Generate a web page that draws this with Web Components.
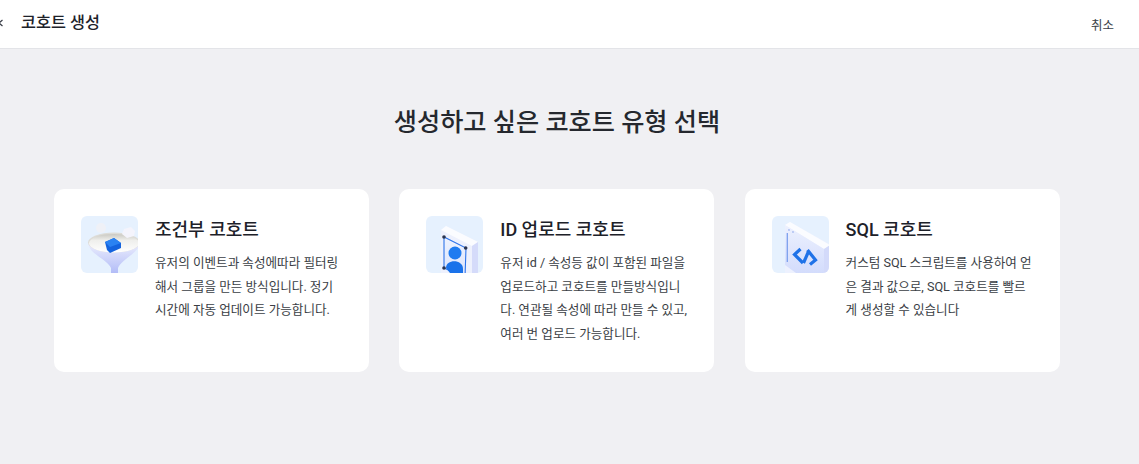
<!DOCTYPE html>
<html lang="ko"><head><meta charset="utf-8"><style>
html,body{margin:0;padding:0;background:#f0f0f3;font-family:Roboto,"Noto Sans CJK KR",sans-serif;color:#1d2129;}
body{width:1139px;height:464px;overflow:hidden}
</style></head><body>
<template id="t-bar"><style>
:host{display:flex;box-sizing:border-box;height:49px;background:#fff;border-bottom:1px solid #e3e4e8;align-items:flex-start;justify-content:space-between;}
.l{display:flex;align-items:center;height:46px;margin-left:-5px}
.l svg{display:block;width:10px;height:10px;margin-right:16px}
.t{font-size:16.3px;font-weight:500;color:#1d2129;line-height:46px}
.c{font-size:12.5px;color:#3a3f48;line-height:52px;margin-right:25px}
</style><div class="l"><svg viewBox="0 0 10 10"><path d="M7.5 2 L4 5 L7.5 8" fill="none" stroke="#3a3f48" stroke-width="1.2"/></svg><span class="t"><slot name="title"></slot></span></div><span class="c"><slot name="action"></slot></span></template>

<template id="t-card"><style>
:host{display:flex;box-sizing:border-box;height:183px;background:#fff;border-radius:10px;padding:27px 27px 0;gap:17px;min-width:0}
.i{flex:none;width:57px;height:57px;border-radius:6px;overflow:hidden;background:#e6f1fe}
.i ::slotted(svg){display:block;width:57px;height:57px}
.b{min-width:0;flex:1}
.h{font-size:18px;font-weight:500;line-height:26px;padding-top:1px;color:#1d2129;margin-bottom:8px;white-space:nowrap}
.d{font-size:12.6px;line-height:23.7px;color:#3a3e45;white-space:nowrap}
</style><div class="i"><slot name="icon"></slot></div><div class="b"><div class="h"><slot name="title"></slot></div><div class="d"><slot></slot></div></div></template>

<script>
class AppBar extends HTMLElement{constructor(){super();this.attachShadow({mode:'open'}).append(document.getElementById('t-bar').content.cloneNode(true));}}
class CohortCard extends HTMLElement{constructor(){super();this.attachShadow({mode:'open'}).append(document.getElementById('t-card').content.cloneNode(true));}}
class CohortPage extends HTMLElement{constructor(){super();this.attachShadow({mode:'open'}).innerHTML=`<style>
:host{display:block;padding-left:54px;width:1006px}
h1{margin:0;font-size:25.2px;font-weight:500;line-height:36px;padding-top:56px;text-align:center;color:#25282e;width:1006px}
.g{display:grid;grid-template-columns:repeat(3,315px);column-gap:30.3px;margin-top:48px}
</style><h1><slot name="heading"></slot></h1><div class="g"><slot></slot></div>`;}}
customElements.define('app-bar',AppBar);customElements.define('cohort-card',CohortCard);customElements.define('cohort-page',CohortPage);
</script>

<app-bar><span slot="title">코호트 생성</span><span slot="action">취소</span></app-bar>
<cohort-page>
<span slot="heading">생성하고 싶은 코호트 유형 선택</span>
<cohort-card>
<svg slot="icon" viewBox="0 0 57 57"><defs><linearGradient id="f1" x1="0" y1="0" x2="0" y2="1"><stop offset="0" stop-color="#eceefd"/><stop offset="1" stop-color="#b2bcf7"/></linearGradient><linearGradient id="f2" x1="0" y1="0" x2="0" y2="1"><stop offset="0" stop-color="#c9c8c2"/><stop offset=".35" stop-color="#efefec"/><stop offset="1" stop-color="#fff"/></linearGradient></defs>
<path d="M7 27 C8 38 26 43 30 52 L30 57 L37 57 L37 52 C40 44 56 38 60 27 Z" fill="url(#f1)"/>
<ellipse cx="33" cy="26.5" rx="26" ry="10" fill="#dddcd7"/><ellipse cx="33" cy="27.2" rx="25" ry="9.3" fill="url(#f2)"/>
<circle cx="20" cy="12" r="5" fill="#eff1f7"/><path d="M43 13 L50 11 L54 15 L53 20 L46 22 L41 18 Z" fill="#f4f4fc"/>
<path d="M24 26 L33 22 L40 27 L40 32 L29 37 L26 34 Z" fill="#1463de"/><path d="M24 26 L33 22 L40 27 L29 31 Z" fill="#2a82f2"/></svg>
<span slot="title">조건부 코호트</span>유저의 이벤트과 속성에따라 필터링<br>해서 그룹을 만든 방식입니다. 정기<br>시간에 자동 업데이트 가능합니다.</cohort-card>
<cohort-card>
<svg slot="icon" viewBox="0 0 57 57"><defs><linearGradient id="d1" x1="0" y1="0" x2="0" y2="1"><stop offset="0" stop-color="#eef2fe"/><stop offset="1" stop-color="#dbe3fc"/></linearGradient></defs><path d="M15 14 L15 57 L52 57 L52 26 L20 10 Z" fill="#eef1fd"/><path d="M15 14 L20 10 L52 26 L46 30 Z" fill="#fbfcff"/><path d="M46 30 L52 26 L52 57 L46 57 Z" fill="#d5dbfa"/>
<path d="M18 21 L18 52 L39 62 L40 32 Z" fill="url(#d1)" stroke="#2f74ea" stroke-width="1.1"/><circle cx="18" cy="21" r="1.8" fill="#2a3450"/><circle cx="39.7" cy="32" r="1.8" fill="#2a3450"/><circle cx="18" cy="52" r="1.8" fill="#2a3450"/>
<circle cx="29" cy="37" r="6.5" fill="#1f7bf0"/><path d="M20 52 C20 43 37 43 37 53 L37 57 L24 57 Z" fill="#1a72ea"/></svg>
<span slot="title">ID 업로드 코호트</span>유저 id / 속성등 값이 포함된 파일을<br>업로드하고 코호트를 만들방식입니<br>다. 연관될 속성에 따라 만들 수 있고,<br>여러 번 업로드 가능합니다.</cohort-card>
<cohort-card>
<svg slot="icon" viewBox="0 0 57 57"><defs><linearGradient id="s1" x1="0" y1="0" x2="0" y2="1"><stop offset="0" stop-color="#edf1fe"/><stop offset="1" stop-color="#d3dcfc"/></linearGradient></defs><path d="M13 9 L18 6 L57 28 L57 57 L13 57 Z" fill="#edf1fe"/><path d="M13 9 L18 6 L58 29 L52 33 Z" fill="#fbfcff"/><path d="M52 33 L58 29 L58 57 L52 57 Z" fill="#d3dafa"/><path d="M13 9 L52 33 L52 57 L24 57 L13 49 Z" fill="url(#s1)"/>
<path d="M15.3 17 L15.3 46" stroke="#7ba0ee" stroke-width="1.3"/><circle cx="17" cy="14" r=".9" fill="#a9bcf0"/><circle cx="21" cy="16" r=".9" fill="#a9bcf0"/>
<g fill="none" stroke="#1f72e8" stroke-width="3.2"><path d="M28.5 33 L22.5 38.5 L31 47"/><path d="M36.3 36 L31.5 47"/><path d="M35.5 34 L43.5 44 L38 48.5"/></g></svg>
<span slot="title">SQL 코호트</span>커스텀 SQL 스크립트를 사용하여 얻<br>은 결과 값으로, SQL 코호트를 빨르<br>게 생성할 수 있습니다</cohort-card>
</cohort-page>
</body></html>
